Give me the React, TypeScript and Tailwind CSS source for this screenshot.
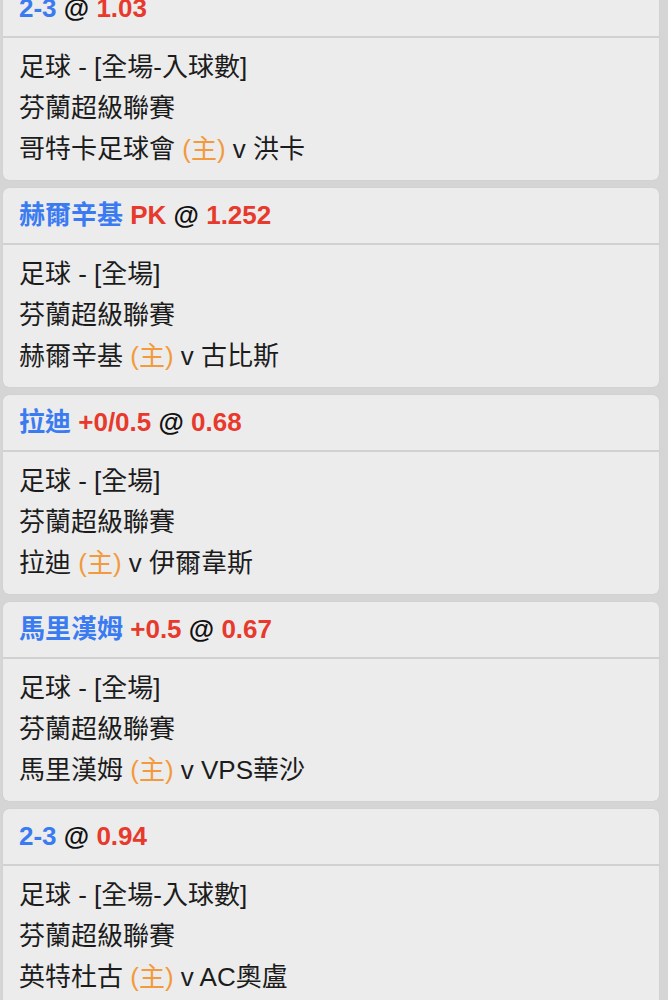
import React from 'react';

type Bet = {
  pick?: string;
  line?: string;
  odds: string;
  market: string;
  league: string;
  home: string;
  away: string;
};

const bets: Bet[] = [
  { pick: '2-3', odds: '1.03', market: '足球 - [全場-入球數]', league: '芬蘭超級聯賽', home: '哥特卡足球會', away: '洪卡' },
  { pick: '赫爾辛基', line: 'PK', odds: '1.252', market: '足球 - [全場]', league: '芬蘭超級聯賽', home: '赫爾辛基', away: '古比斯' },
  { pick: '拉迪', line: '+0/0.5', odds: '0.68', market: '足球 - [全場]', league: '芬蘭超級聯賽', home: '拉迪', away: '伊爾韋斯' },
  { pick: '馬里漢姆', line: '+0.5', odds: '0.67', market: '足球 - [全場]', league: '芬蘭超級聯賽', home: '馬里漢姆', away: 'VPS華沙' },
  { pick: '2-3', odds: '0.94', market: '足球 - [全場-入球數]', league: '芬蘭超級聯賽', home: '英特杜古', away: 'AC奧盧' },
];

const font = { fontFamily: '"Liberation Sans", "Noto Sans CJK TC", sans-serif' };

const BetCard: React.FC<{ bet: Bet }> = ({ bet }) => (
  <div className="h-[199px] rounded-[6px] bg-[#ececec] shadow-[0_0_1px_rgba(0,0,0,0.15)] overflow-hidden">
    <div className="h-[57px] flex items-center pl-4 border-b-2 border-[#d1d1d1] text-[26px] font-bold whitespace-nowrap">
      <span className="text-[#3a7bf2]">{bet.pick}</span>
      {bet.line && <span className="text-[#e8392d]">&nbsp;{bet.line}</span>}
      <span className="text-[#111]">&nbsp;@&nbsp;</span>
      <span className="text-[#e8392d]">{bet.odds}</span>
    </div>
    <div className="pt-[9px] pl-4 text-[26px] leading-[41px] text-[#1c1c1c] whitespace-nowrap">
      <div>{bet.market}</div>
      <div>{bet.league}</div>
      <div>
        {bet.home} <span className="text-[#f29a3c]">(主)</span> v {bet.away}
      </div>
    </div>
  </div>
);

export default function App() {
  return (
    <div className="h-[1000px] overflow-hidden bg-[#d5d5d5]" style={font}>
      <div className="-mt-[19px] ml-[3px] mr-[9px] flex flex-col gap-2">
        {bets.map((bet, i) => (
          <BetCard key={i} bet={bet} />
        ))}
      </div>
    </div>
  );
}
